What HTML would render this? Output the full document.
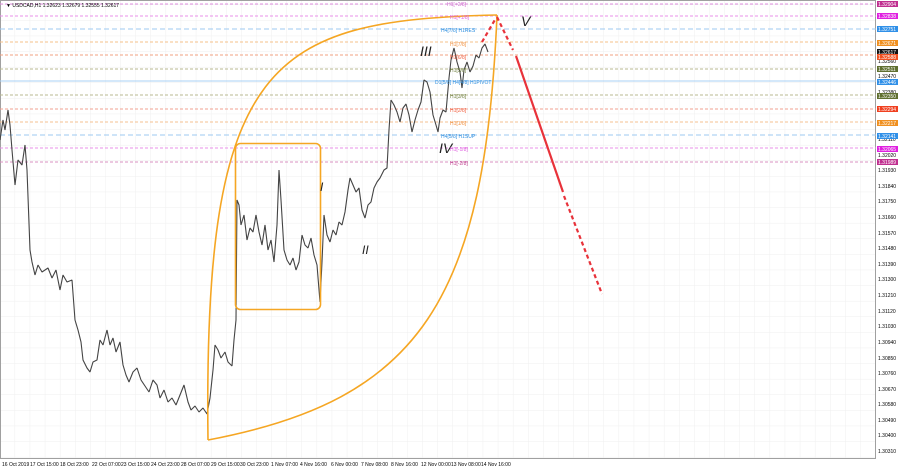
<!DOCTYPE html><html><head><style>body{margin:0;width:900px;height:470px;background:#fff;overflow:hidden;font-family:"Liberation Sans",sans-serif}</style></head><body>
<svg width="900" height="470" xmlns="http://www.w3.org/2000/svg" font-family="Liberation Sans, sans-serif">
<defs><pattern id="g" width="15.1" height="15.6" patternUnits="userSpaceOnUse" x="0" y="5"><path d="M15.1 0V15.6M0 15.6H15.1" stroke="#efefef" stroke-width="1" fill="none"/></pattern></defs>
<rect x="0" y="0" width="876" height="459" fill="url(#g)"/>
<rect x="0.5" y="0.5" width="875" height="458" fill="none" stroke="#a0a0a0"/>
<g stroke-width="1" stroke-dasharray="3,2" fill="none">
<line x1="0" y1="4" x2="876" y2="4" stroke="#e28fe0"/>
<line x1="0" y1="16" x2="876" y2="16" stroke="#e88fe8"/>
<line x1="0" y1="29" x2="876" y2="29" stroke="#9cc8f0" stroke-dasharray="5,3"/>
<line x1="0" y1="42" x2="876" y2="42" stroke="#f5c08a"/>
<line x1="0" y1="55" x2="876" y2="55" stroke="#f0a080"/>
<line x1="0" y1="69" x2="876" y2="69" stroke="#b8b890"/>
<line x1="0" y1="81" x2="876" y2="81" stroke="#a8d0f5" stroke-dasharray="none"/>
<line x1="0" y1="95" x2="876" y2="95" stroke="#b8b890"/>
<line x1="0" y1="109" x2="876" y2="109" stroke="#f0a090"/>
<line x1="0" y1="122" x2="876" y2="122" stroke="#f5c090"/>
<line x1="0" y1="135" x2="876" y2="135" stroke="#9cc8f0" stroke-dasharray="5,3"/>
<line x1="0" y1="148" x2="876" y2="148" stroke="#e890e8"/>
<line x1="0" y1="162" x2="876" y2="162" stroke="#d890c0"/>
</g>
<text x="6" y="7" font-size="5" fill="#000">▼ USDCAD,H1  1.32623 1.32679 1.32555 1.32617</text>
<polyline fill="none" stroke="#444" stroke-width="1.1" stroke-linejoin="bevel" points="0,140 3,120 5,130 8,110 10,125 12,150 15,185 18,160 22,165 25,145 27,170 30,250 32,262 35,275 38,265 42,272 48,268 52,278 56,270 60,290 63,275 67,282 72,280 75,320 78,330 81,342 83,360 87,368 90,372 93,362 97,360 100,340 103,345 107,330 110,345 113,338 116,352 120,342 123,365 126,375 129,382 133,372 137,368 141,380 145,386 149,392 153,380 157,385 160,398 164,390 168,402 172,398 176,405 180,395 184,385 188,402 191,410 195,406 199,412 203,408 207,414 210,398 213,370 215,345 218,350 221,358 225,352 228,362 232,366 234,340 236,320 237,200 239,205 241,225 244,215 247,240 250,228 253,232 256,215 259,232 262,245 265,225 268,250 271,240 274,262 277,225 279,170 281,200 284,250 287,260 290,265 293,258 296,270 299,262 302,235 305,245 308,248 311,238 314,255 317,265 320,302 322,262 324,215 327,235 330,242 333,230 336,235 339,222 342,225 345,212 348,190 350,178 353,185 356,192 359,188 362,210 365,218 368,205 371,202 374,188 377,182 380,178 384,170 387,168 389,130 391,100 394,105 397,112 400,122 403,108 406,104 409,115 412,132 415,120 418,110 421,102 424,80 427,82 430,92 433,115 436,125 438,132 440,118 443,110 446,112 449,78 451,60 454,48 457,62 460,72 462,88 464,70 467,62 470,72 473,66 476,55 479,58 482,48 485,44 488,52"/>
<g stroke="#f5a623" stroke-width="1.6" fill="none">
<path d="M208,440 C203,60 270,20 497,15"/>
<path d="M208,440 C420,400 485,300 497,15"/>
<rect x="235.5" y="143.5" width="85" height="166" rx="5"/>
</g>
<g stroke="#e8323a" stroke-width="2.2" fill="none">
<path d="M497,17 L513,50" stroke-dasharray="4,3"/>
<path d="M516,56 L563,192"/>
<path d="M564,196 L602,294" stroke-dasharray="4,3"/>
<path d="M482,42 L496,18" stroke-dasharray="4,3"/>
</g>
<g font-size="14" font-style="italic" fill="#222"><text x="420" y="56">III</text><text x="439" y="153">IV</text><text x="521" y="26">V</text><text x="320" y="191" font-size="12">I</text><text x="362" y="254" font-size="12">II</text></g>
<g font-size="5">
<text x="447" y="6" fill="#d070d0">H1[+2/8]</text>
<text x="450" y="19" fill="#e060e0">H1[+1/8]</text>
<text x="441" y="32" fill="#3090e0">H4[7/8] H1RES</text>
<text x="450" y="46" fill="#f09040">H1[7/8]</text>
<text x="450" y="59" fill="#f06040">H1[6/8]</text>
<text x="450" y="72" fill="#708040">H1[5/8]</text>
<text x="435" y="84" fill="#3090e0">D1[5/8] H4[4/8] H1PIVOT</text>
<text x="450" y="98" fill="#708040">H1[3/8]</text>
<text x="450" y="112" fill="#f06040">H1[2/8]</text>
<text x="450" y="125" fill="#f09040">H1[1/8]</text>
<text x="441" y="138" fill="#3090e0">H4[5/8] H1SUP</text>
<text x="450" y="151" fill="#e060e0">H1[-1/8]</text>
<text x="450" y="165" fill="#c04090">H1[-2/8]</text>
</g>
<g font-size="5" fill="#000">
<text x="878" y="63">1.32560</text><text x="878" y="78">1.32470</text><text x="878" y="94">1.32380</text><text x="878" y="126">1.32200</text><text x="878" y="141">1.32110</text><text x="878" y="157">1.32020</text><text x="878" y="172">1.31930</text><text x="878" y="188">1.31840</text><text x="878" y="203">1.31750</text><text x="878" y="219">1.31660</text><text x="878" y="235">1.31570</text><text x="878" y="250">1.31480</text><text x="878" y="266">1.31390</text><text x="878" y="281">1.31300</text><text x="878" y="297">1.31210</text><text x="878" y="313">1.31120</text><text x="878" y="328">1.31030</text><text x="878" y="344">1.30940</text><text x="878" y="360">1.30850</text><text x="878" y="375">1.30760</text><text x="878" y="391">1.30670</text><text x="878" y="406">1.30580</text><text x="878" y="422">1.30490</text><text x="878" y="437">1.30400</text><text x="878" y="453">1.30310</text>
</g>
<g font-size="5" fill="#fff">
<rect x="877" y="1" width="21" height="6" fill="#c03090"/><text x="878" y="6">1.32904</text>
<rect x="877" y="13" width="21" height="6" fill="#e020e0"/><text x="878" y="18">1.32838</text>
<rect x="877" y="26" width="21" height="6" fill="#3090e8"/><text x="878" y="31">1.32751</text>
<rect x="877" y="40" width="21" height="6" fill="#f09020"/><text x="878" y="45">1.32671</text>
<rect x="877" y="49" width="21" height="6" fill="#111"/><text x="878" y="54">1.32617</text>
<rect x="877" y="54" width="21" height="6" fill="#f05020"/><text x="878" y="59">1.32588</text>
<rect x="877" y="66" width="21" height="6" fill="#607030"/><text x="878" y="71">1.32511</text>
<rect x="877" y="79" width="21" height="6" fill="#3090e8"/><text x="878" y="84">1.32446</text>
<rect x="877" y="93" width="21" height="6" fill="#607030"/><text x="878" y="98">1.32350</text>
<rect x="877" y="106" width="21" height="6" fill="#f04020"/><text x="878" y="111">1.32294</text>
<rect x="877" y="120" width="21" height="6" fill="#f09020"/><text x="878" y="125">1.32217</text>
<rect x="877" y="133" width="21" height="6" fill="#3090e8"/><text x="878" y="138">1.32141</text>
<rect x="877" y="146" width="21" height="6" fill="#e020e0"/><text x="878" y="151">1.32065</text>
<rect x="877" y="159" width="21" height="6" fill="#c03090"/><text x="878" y="164">1.31989</text>
</g>
<g font-size="5" fill="#000">
<text x="2" y="466">16 Oct 2019</text><text x="30" y="466">17 Oct 15:00</text><text x="60" y="466">18 Oct 23:00</text><text x="92" y="466">22 Oct 07:00</text><text x="121" y="466">23 Oct 15:00</text><text x="151" y="466">24 Oct 23:00</text><text x="181" y="466">28 Oct 07:00</text><text x="211" y="466">29 Oct 15:00</text><text x="240" y="466">30 Oct 23:00</text><text x="271" y="466">1 Nov 07:00</text><text x="300" y="466">4 Nov 16:00</text><text x="331" y="466">6 Nov 00:00</text><text x="361" y="466">7 Nov 08:00</text><text x="391" y="466">8 Nov 16:00</text><text x="421" y="466">12 Nov 00:00</text><text x="451" y="466">13 Nov 08:00</text><text x="481" y="466">14 Nov 16:00</text>
</g>
</svg></body></html>
